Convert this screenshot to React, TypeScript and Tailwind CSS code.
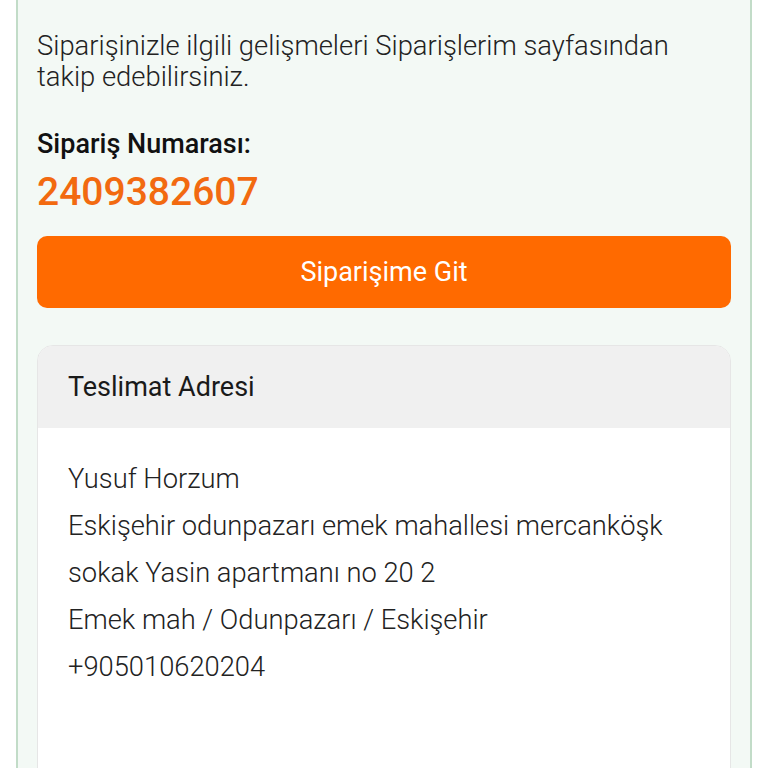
const addressLines = [
  'Yusuf Horzum',
  'Eskişehir odunpazarı emek mahallesi mercanköşk',
  'sokak Yasin apartmanı no 20 2',
  'Emek mah / Odunpazarı / Eskişehir',
  '+905010620204',
]

export default function App() {
  return (
    <div className="min-h-[768px] bg-white font-['Roboto',sans-serif] overflow-hidden">
      <div className="mx-4 min-h-[768px] border-x-2 border-[#c2dcc8] bg-[#f3f9f5] px-[19px] pt-[31px]">
        <p className="text-[27.4px] font-light leading-[31px] text-[#222]">
          Siparişinizle ilgili gelişmeleri Siparişlerim sayfasından
          <br />
          takip edebilirsiniz.
        </p>

        <div className="mt-[36px] text-[27px] font-medium leading-[30px] text-[#111]">
          Sipariş Numarası:
        </div>
        <div className="mt-[10px] text-[39px] font-medium leading-[46px] text-[#f26a10]">
          2409382607
        </div>

        <button className="mt-[21px] flex h-[72px] w-full items-center justify-center rounded-[10px] bg-[#ff6a00] text-[27px] font-normal text-white">
          Siparişime Git
        </button>

        <div className="mt-[37px] overflow-hidden rounded-t-[16px] border border-[#e6e6e6] bg-white">
          <div className="flex h-[82px] items-center bg-[#f0f0f0] px-[30px] text-[27px] font-normal text-[#1a1a1a]">
            Teslimat Adresi
          </div>
          <div className="min-h-[360px] px-[30px] pt-[28px] text-[27.3px] font-light leading-[47px] text-[#222]">
            {addressLines.map((line) => (
              <div key={line}>{line}</div>
            ))}
          </div>
        </div>
      </div>
    </div>
  )
}
